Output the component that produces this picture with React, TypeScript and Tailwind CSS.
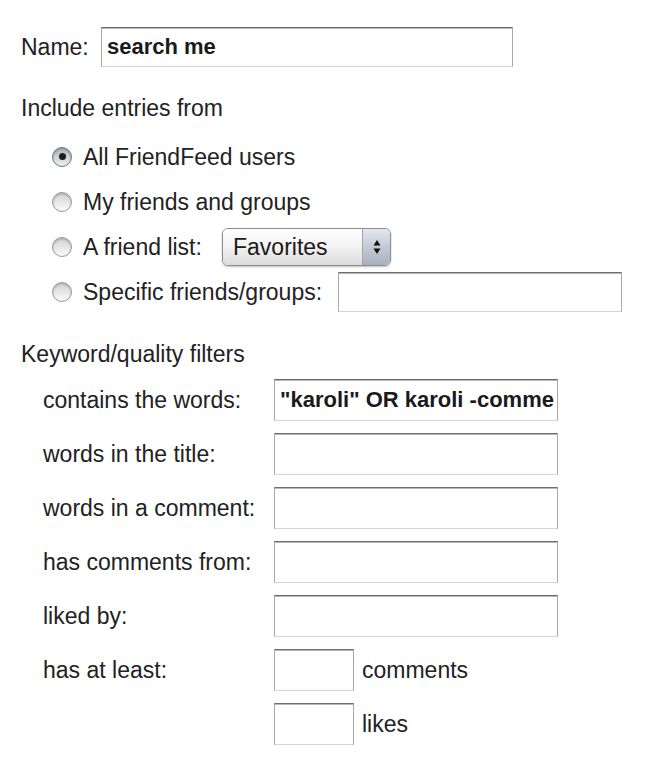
import React from "react";

function Radio({ checked }: { checked?: boolean }) {
  return (
    <span
      className={`relative flex h-[20px] w-[20px] shrink-0 items-center justify-center rounded-full border ${
        checked
          ? "border-[#6f7680] bg-gradient-to-b from-[#aeb3ba] to-[#eef0f2]"
          : "border-[#9a9a9a] bg-gradient-to-b from-[#d2d2d2] to-[#fbfbfb]"
      } shadow-[inset_0_1px_2px_rgba(0,0,0,0.25)]`}
    >
      {checked && <span className="h-[7px] w-[7px] rounded-full bg-[#1e1e1e]" />}
    </span>
  );
}

function TextBox({
  value,
  className,
}: {
  value?: string;
  className: string;
}) {
  return (
    <div
      className={`flex items-center overflow-hidden whitespace-nowrap border border-t-[#6e6e6e] border-x-[#a8a8a8] border-b-[#d4d4d4] bg-white pl-[5px] text-[22px] font-bold text-[#1a1a1a] shadow-[inset_0_1px_0_#b8b8b8] ${className}`}
    >
      {value}
    </div>
  );
}

function SelectBox() {
  return (
    <div className="flex h-[38px] w-[169px] overflow-hidden rounded-[6px] border border-[#8c8c8c] shadow-[0_1px_2px_rgba(0,0,0,0.25)]">
      <div className="flex flex-1 items-center bg-gradient-to-b from-[#ffffff] via-[#f2f2f2] to-[#dcdcdc] pl-[10px] text-[23px] text-[#1a1a1a]">
        Favorites
      </div>
      <div className="flex w-[28px] items-center justify-center border-l border-[#a0a6ae] bg-gradient-to-b from-[#e4e8ee] via-[#c3cad4] to-[#a7b1be]">
        <svg width="10" height="20" viewBox="0 0 10 20">
          <polygon points="5,3 8.5,8.5 1.5,8.5" fill="#111" />
          <polygon points="1.5,11.5 8.5,11.5 5,17" fill="#111" />
        </svg>
      </div>
    </div>
  );
}

function FilterRow({
  label,
  value,
}: {
  label: string;
  value?: string;
}) {
  return (
    <div className="flex h-[42px] items-center">
      <span className="w-[231px] shrink-0">{label}</span>
      <TextBox value={value} className="h-[42px] w-[284px]" />
    </div>
  );
}

export default function App() {
  return (
    <div className="min-h-[776px] w-[667px] bg-white pl-[21px] font-['Liberation_Sans',Arial,sans-serif] text-[23px] leading-[28px] text-[#222]">
      <div className="flex h-[40px] items-center pt-0 mt-[27px]">
        <span className="w-[80px] shrink-0">Name:</span>
        <TextBox value="search me" className="h-[40px] w-[412px]" />
      </div>

      <div className="mt-[27px] h-[28px]">Include entries from</div>

      <div className="mt-[12px] flex flex-col pl-[31px]">
        <div className="flex h-[45px] items-center">
          <Radio checked />
          <span className="ml-[11px]">All FriendFeed users</span>
        </div>
        <div className="flex h-[45px] items-center">
          <Radio />
          <span className="ml-[11px]">My friends and groups</span>
        </div>
        <div className="flex h-[45px] items-center">
          <Radio />
          <span className="ml-[11px] w-[139px] shrink-0">A friend list:</span>
          <SelectBox />
        </div>
        <div className="flex h-[45px] items-center">
          <Radio />
          <span className="ml-[11px] w-[255px] shrink-0">Specific friends/groups:</span>
          <TextBox className="h-[40px] w-[284px]" />
        </div>
      </div>

      <div className="mt-[26px] h-[28px]">Keyword/quality filters</div>

      <div className="mt-[11px] flex flex-col gap-[12px] pl-[22px]">
        <FilterRow label="contains the words:" value={'"karoli" OR karoli -comme'} />
        <FilterRow label="words in the title:" />
        <FilterRow label="words in a comment:" />
        <FilterRow label="has comments from:" />
        <FilterRow label="liked by:" />
        <div className="flex h-[42px] items-center">
          <span className="w-[231px] shrink-0">has at least:</span>
          <TextBox className="h-[42px] w-[80px]" />
          <span className="ml-[8px]">comments</span>
        </div>
        <div className="flex h-[42px] items-center">
          <span className="w-[231px] shrink-0" />
          <TextBox className="h-[42px] w-[80px]" />
          <span className="ml-[8px]">likes</span>
        </div>
      </div>
    </div>
  );
}
